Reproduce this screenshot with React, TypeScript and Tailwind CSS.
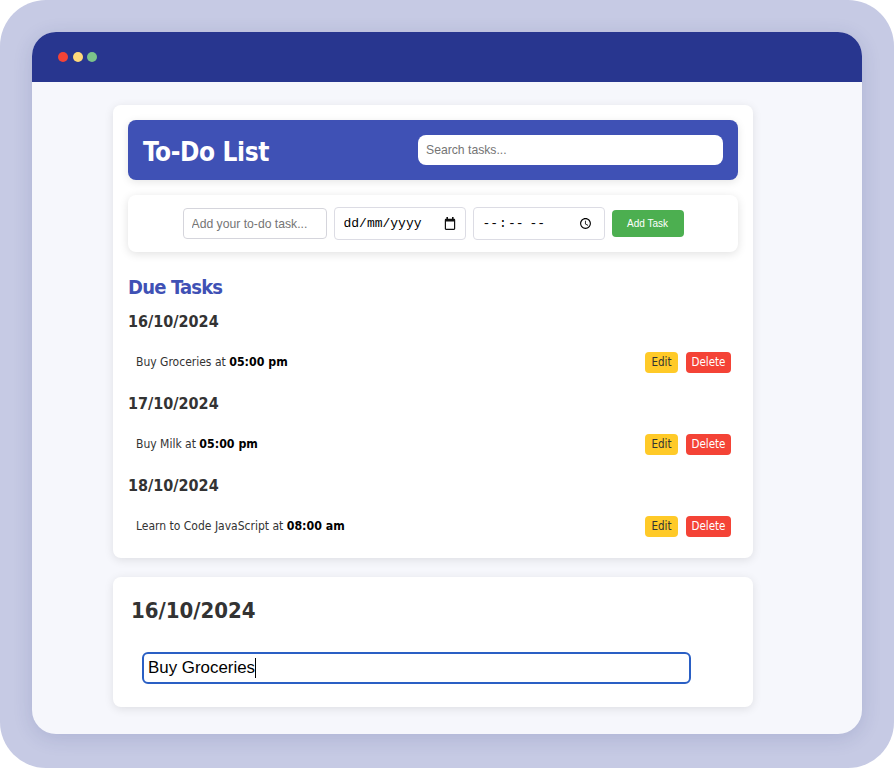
import React from 'react';

const tahoma = "font-['DejaVu_Sans',sans-serif] [font-stretch:condensed]";

const groups = [
  { date: '16/10/2024', name: 'Buy Groceries', time: '05:00 pm' },
  { date: '17/10/2024', name: 'Buy Milk', time: '05:00 pm' },
  { date: '18/10/2024', name: 'Learn to Code JavaScript', time: '08:00 am' },
];

export default function App() {
  return (
    <div className="w-[894px] h-[768px] bg-white overflow-hidden">
      <div className="h-full rounded-[46px] bg-[#c6cae4] p-8">
        <div className="h-[702px] rounded-[24px] overflow-hidden bg-[#f6f7fc] shadow-[0_4px_20px_rgba(30,40,110,0.14)]">
          {/* Window bar */}
          <div className="h-[50px] bg-[#28368f] flex items-start gap-[4.5px] pl-[26px] pt-[20px]">
            <span className="w-[10px] h-[10px] rounded-full bg-[#f44336]" />
            <span className="w-[10px] h-[10px] rounded-full bg-[#ffd97a]" />
            <span className="w-[10px] h-[10px] rounded-full bg-[#7cc38a]" />
          </div>

          <div className="w-[640px] ml-[81px] mt-[23px] flex flex-col gap-[19px]">
            {/* Main card */}
            <div className="h-[453px] bg-white rounded-lg shadow-[0_2px_10px_rgba(0,0,0,0.1)] p-[15px]">
              <div className="h-[60px] bg-[#3f51b5] rounded-lg flex items-center justify-between px-[15px] shadow-[0_2px_8px_rgba(0,0,0,0.1)]">
                <h1 className={`${tahoma} pt-[3px] text-[26px] font-bold tracking-[-0.4px] text-white leading-none`}>To-Do List</h1>
                <input
                  placeholder="Search tasks..."
                  className="w-[305px] h-[30px] rounded-lg bg-white px-2 text-[12.2px] font-['Liberation_Sans',sans-serif] placeholder:text-[#757575] outline-none"
                />
              </div>

              <div className="h-[57px] mt-[15px] bg-white rounded-lg shadow-[0_2px_10px_rgba(0,0,0,0.12)] flex items-center justify-center gap-[7px]">
                <input
                  placeholder="Add your to-do task..."
                  className="w-[144px] h-[31px] rounded border border-[#d5d5dc] px-2 text-[12.2px] font-['Liberation_Sans',sans-serif] placeholder:text-[#757575] outline-none"
                />
                {/* headless locale prints mm/dd, so the date field is a plain input plus icon */}
                <div className="w-[132px] h-[33px] rounded border border-[#dcdce4] flex items-center pl-[9px] pr-[9px]">
                  <input
                    placeholder="dd/mm/yyyy"
                    className="w-0 flex-1 text-[13px] font-['Liberation_Mono',monospace] placeholder:text-black outline-none"
                  />
                  <svg width="12" height="13" viewBox="0 0 15 16" fill="#111111">
                    <path d="M12.5 2H12V0H10V2H5V0H3V2H2.5C1.67 2 1 2.67 1 3.5V14.5C1 15.33 1.67 16 2.5 16H12.5C13.33 16 14 15.33 14 14.5V3.5C14 2.67 13.33 2 12.5 2ZM12.5 14.5H2.5V5.5H12.5V14.5Z" />
                  </svg>
                </div>
                <input
                  type="time"
                  className="w-[132px] h-[33px] rounded border border-[#dcdce4] px-2 text-[13px] text-black font-['Liberation_Mono',monospace] outline-none"
                />
                <button className="w-[72px] h-[27px] rounded bg-[#4caf50] text-white text-[10px] font-['Liberation_Sans',sans-serif]">
                  Add Task
                </button>
              </div>

              <h2 className={`${tahoma} mt-[23px] h-[24px] leading-[24px] text-[20px] font-bold tracking-[-0.8px] text-[#3f51b5]`}>Due Tasks</h2>

              {groups.map((g) => (
                <div key={g.date} className="h-[81.85px] pt-[11px]">
                  <h3 className={`${tahoma} h-[24px] leading-[24px] text-[16px] font-bold text-[#333333]`}>{g.date}</h3>
                  <div className={`${tahoma} mt-[18px] h-[21px] flex items-center justify-between pl-2 pr-[7px] text-[12px] text-[#333333]`}>
                    <span>
                      {g.name} at <b className="text-black text-[12.3px]">{g.time}</b>
                    </span>
                    <div className="flex gap-2">
                      <button className="w-[33px] h-[21px] pt-px rounded bg-[#ffca28] text-[#333333] text-[11.5px]">Edit</button>
                      <button className="w-[45px] h-[21px] pt-px rounded bg-[#f44336] text-white text-[11.5px]">Delete</button>
                    </div>
                  </div>
                </div>
              ))}
            </div>

            {/* Edit card */}
            <div className="h-[130px] bg-white rounded-lg shadow-[0_2px_10px_rgba(0,0,0,0.1)] pl-[18px] pt-[20px]">
              <h3 className={`${tahoma} h-[28px] leading-[28px] text-[22px] font-bold text-[#333333]`}>16/10/2024</h3>
              <div className="mt-[27px] ml-[11px] w-[549px] h-[32px] rounded-md border-2 border-[#2a5fc4] flex items-center pl-1 text-[16.9px] text-black font-['Liberation_Sans',sans-serif]">
                Buy Groceries
                <span className="w-px h-[20px] bg-black" />
              </div>
            </div>
          </div>
        </div>
      </div>
    </div>
  );
}
